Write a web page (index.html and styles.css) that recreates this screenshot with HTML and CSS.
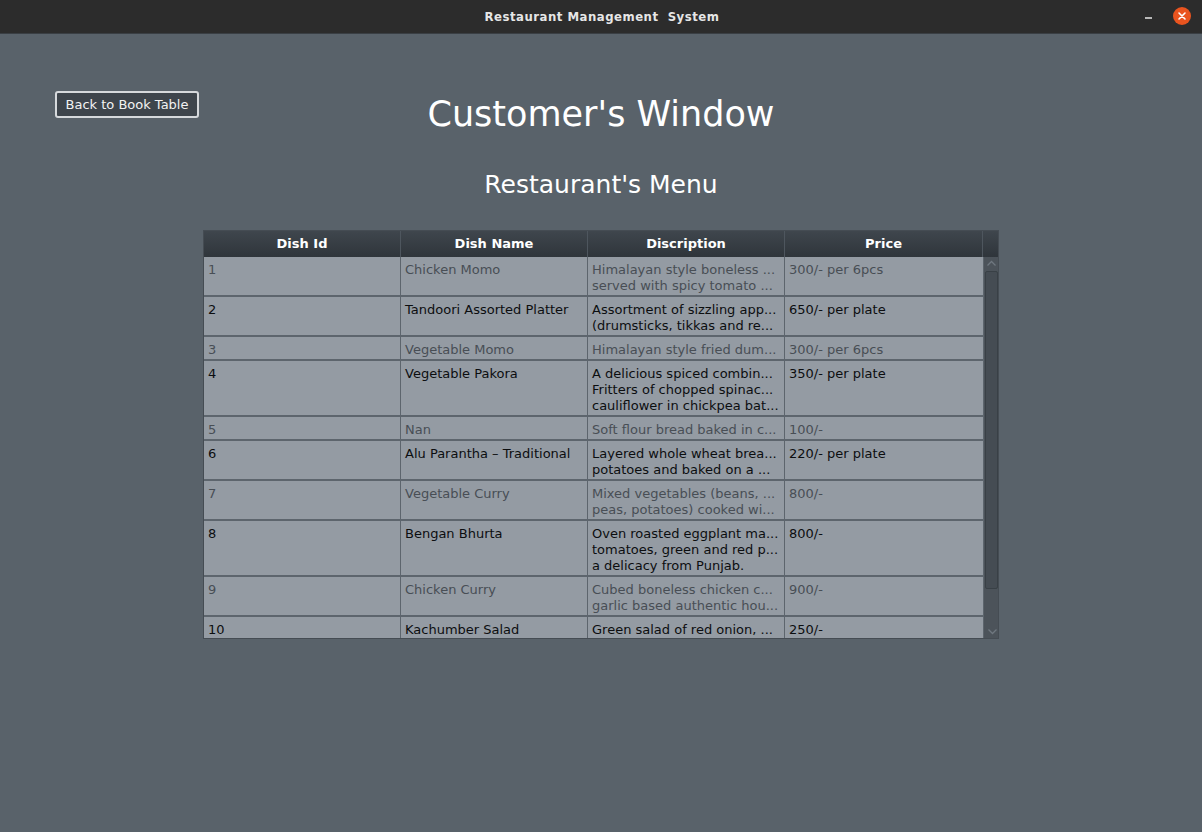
FILE: index.html
```html
<!DOCTYPE html>
<html>
<head>
<meta charset="utf-8">
<link rel="stylesheet" href="styles.css">
</head>
<body>
<div class="titlebar">
  <div class="tb-title">Restaurant Management&nbsp; System</div>
  <div class="tb-controls">
    <span class="tb-min"></span>
    <span class="tb-close"><svg width="18" height="18" viewBox="0 0 18 18"><circle cx="9" cy="9" r="9" fill="#e9541f"/><path d="M6 6 L12 12 M12 6 L6 12" stroke="#fff" stroke-width="1.6" stroke-linecap="round"/></svg></span>
  </div>
</div>
<div class="content">
  <div class="top-row">
    <div class="left"><button class="back-btn">Back to Book Table</button></div>
    <h1 class="main-title">Customer's Window</h1>
    <div></div>
  </div>
  <h2 class="sub-title">Restaurant's Menu</h2>
  <div class="table-wrap">
    <div class="table-head">
      <div class="th c1">Dish Id</div>
      <div class="th c2">Dish Name</div>
      <div class="th c3">Discription</div>
      <div class="th c4">Price</div>
      <div class="th corner"></div>
    </div>
    <div class="table-body">
      <div class="rows">
        <div class="row odd l2"><div class="td c1">1</div><div class="td c2">Chicken Momo</div><div class="td c3">Himalayan style boneless ...<br>served with spicy tomato ...</div><div class="td c4">300/- per 6pcs</div></div>
        <div class="row even l2"><div class="td c1">2</div><div class="td c2">Tandoori Assorted Platter</div><div class="td c3">Assortment of sizzling app...<br>(drumsticks, tikkas and re...</div><div class="td c4">650/- per plate</div></div>
        <div class="row odd l1"><div class="td c1">3</div><div class="td c2">Vegetable Momo</div><div class="td c3">Himalayan style fried dum...</div><div class="td c4">300/- per 6pcs</div></div>
        <div class="row even l3"><div class="td c1">4</div><div class="td c2">Vegetable Pakora</div><div class="td c3">A delicious spiced combin...<br>Fritters of chopped spinac...<br>cauliflower in chickpea bat...</div><div class="td c4">350/- per plate</div></div>
        <div class="row odd l1"><div class="td c1">5</div><div class="td c2">Nan</div><div class="td c3">Soft flour bread baked in c...</div><div class="td c4">100/-</div></div>
        <div class="row even l2"><div class="td c1">6</div><div class="td c2">Alu Parantha – Traditional</div><div class="td c3">Layered whole wheat brea...<br>potatoes and baked on a ...</div><div class="td c4">220/- per plate</div></div>
        <div class="row odd l2"><div class="td c1">7</div><div class="td c2">Vegetable Curry</div><div class="td c3">Mixed vegetables (beans, ...<br>peas, potatoes) cooked wi...</div><div class="td c4">800/-</div></div>
        <div class="row even l3"><div class="td c1">8</div><div class="td c2">Bengan Bhurta</div><div class="td c3">Oven roasted eggplant ma...<br>tomatoes, green and red p...<br>a delicacy from Punjab.</div><div class="td c4">800/-</div></div>
        <div class="row odd l2"><div class="td c1">9</div><div class="td c2">Chicken Curry</div><div class="td c3">Cubed boneless chicken c...<br>garlic based authentic hou...</div><div class="td c4">900/-</div></div>
        <div class="row even l1"><div class="td c1">10</div><div class="td c2">Kachumber Salad</div><div class="td c3">Green salad of red onion, ...</div><div class="td c4">250/-</div></div>
      </div>
      <div class="scrollbar">
        <svg class="arrow-up" width="11" height="7" viewBox="0 0 11 7"><path d="M1.5 5.5 L5.5 1.5 L9.5 5.5" fill="none" stroke="#6f777f" stroke-width="1.3"/></svg>
        <div class="thumb"></div>
        <svg class="arrow-down" width="11" height="7" viewBox="0 0 11 7"><path d="M1.5 1.5 L5.5 5.5 L9.5 1.5" fill="none" stroke="#6f777f" stroke-width="1.3"/></svg>
      </div>
    </div>
  </div>
</div>
</body>
</html>
```
FILE: styles.css
```css
* { box-sizing: border-box; }
html, body { margin: 0; padding: 0; }
body {
  width: 1202px;
  height: 832px;
  background: #59626a;
  font-family: "DejaVu Sans", sans-serif;
  overflow: hidden;
}
.titlebar {
  height: 34px;
  background: #2c2c2c;
  display: flex;
  align-items: center;
  justify-content: center;
  position: relative;
  border-bottom: 1px solid #3a3f44;
}
.tb-title {
  color: #e6e6e6;
  font-weight: bold;
  font-size: 13px;
  font-stretch: condensed;
  letter-spacing: 0.5px;
  font-family: "DejaVu Sans", sans-serif;
  padding-left: 2px;
}
.tb-controls {
  position: absolute;
  right: 11px;
  top: 7px;
  display: flex;
  align-items: center;
  gap: 21px;
}
.tb-min {
  width: 7px;
  height: 2px;
  background: #b8b8b8;
  margin-top: 3px;
}
.tb-close { display: flex; }
.content {
  padding-top: 57px;
}
.top-row {
  display: grid;
  grid-template-columns: 1fr auto 1fr;
  align-items: start;
}
.left { padding-left: 55px; }
.back-btn {
  font-family: "DejaVu Sans", sans-serif;
  font-size: 13px;
  color: #f2f2f2;
  background: #3e454c;
  border: 2px solid #d6d9dc;
  border-radius: 3px;
  height: 27px;
  width: 144px;
  padding: 0;
  line-height: 21px;
  cursor: pointer;
}
.main-title {
  margin: 0;
  font-weight: normal;
  font-size: 35px;
  line-height: 42px;
  color: #ffffff;
  text-align: center;
  padding-top: 2px;
}
.sub-title {
  margin: 35px 0 0 0;
  font-weight: normal;
  font-size: 25px;
  line-height: 30px;
  color: #ffffff;
  text-align: center;
}
.table-wrap {
  width: 796px;
  margin: 30px auto 0;
  border: 1px solid #454c53;
}
.table-head {
  display: flex;
  height: 26px;
  background: linear-gradient(#3f464d, #2f353b);
}
.th {
  color: #ffffff;
  font-weight: bold;
  font-size: 13px;
  text-align: center;
  line-height: 26px;
  border-right: 1px solid #4e565e;
}
.c1 { width: 197px; }
.c2 { width: 187px; }
.c3 { width: 197px; }
.c4 { width: 198px; }
.corner { width: 15px; border-right: none; }
.table-body {
  display: flex;
  height: 381px;
  overflow: hidden;
}
.rows {
  width: 779px;
  background: #949ba3;
}
.row {
  display: flex;
  border-bottom: 2px solid #5d656d;
  background: #949ba3;
}
.row.l1 { height: 24px; }
.row.l2 { height: 40px; }
.row.l3 { height: 56px; }
.td {
  font-size: 13px;
  line-height: 16px;
  padding: 5px 4px 0 4px;
  border-right: 1px solid #5d656d;
  white-space: nowrap;
  overflow: hidden;
}
.td.c4 { border-right: none; }
.odd .td { color: #484e55; }
.even .td { color: #0c0e10; }
.scrollbar {
  width: 17px;
  background: #4c535a;
  border-left: 1px solid #5d656d;
  position: relative;
  display: flex;
  flex-direction: column;
  align-items: center;
}
.arrow-up { margin-top: 3px; }
.thumb {
  margin-top: 4px;
  width: 13px;
  height: 318px;
  background: #454c53;
  border: 1px solid #394046;
  border-radius: 2px;
}
.arrow-down {
  position: absolute;
  bottom: 3px;
  left: 3px;
}
```
